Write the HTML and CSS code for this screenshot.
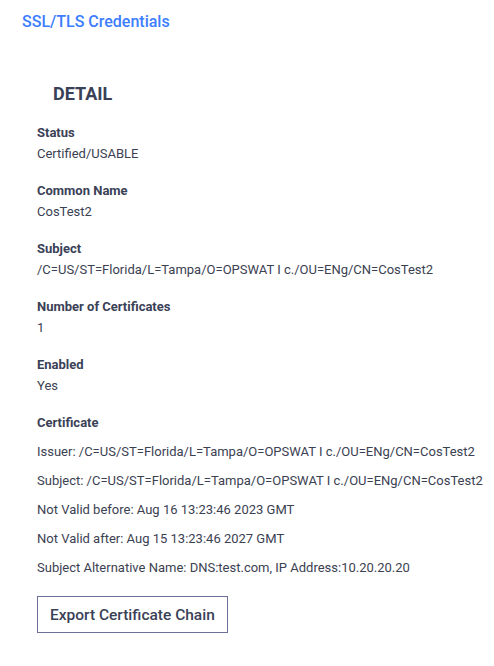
FILE: index.html
```html
<!DOCTYPE html>
<html>
<head>
<meta charset="utf-8">
<link rel="stylesheet" href="styles.css">
</head>
<body>
<div class="page">
  <div class="crumb">SSL/TLS Credentials</div>
  <h2 class="section-title">DETAIL</h2>
  <div class="fields">
    <div class="field">
      <div class="label">Status</div>
      <div class="value">Certified/USABLE</div>
    </div>
    <div class="field">
      <div class="label">Common Name</div>
      <div class="value">CosTest2</div>
    </div>
    <div class="field">
      <div class="label">Subject</div>
      <div class="value">/C=US/ST=Florida/L=Tampa/O=OPSWAT I c./OU=ENg/CN=CosTest2</div>
    </div>
    <div class="field">
      <div class="label">Number of Certificates</div>
      <div class="value">1</div>
    </div>
    <div class="field">
      <div class="label">Enabled</div>
      <div class="value">Yes</div>
    </div>
    <div class="field cert">
      <div class="label">Certificate</div>
      <div class="cert-line">Issuer: /C=US/ST=Florida/L=Tampa/O=OPSWAT I c./OU=ENg/CN=CosTest2</div>
      <div class="cert-line">Subject: /C=US/ST=Florida/L=Tampa/O=OPSWAT I c./OU=ENg/CN=CosTest2</div>
      <div class="cert-line">Not Valid before: Aug 16 13:23:46 2023 GMT</div>
      <div class="cert-line">Not Valid after: Aug 15 13:23:46 2027 GMT</div>
      <div class="cert-line">Subject Alternative Name: DNS:test.com, IP Address:10.20.20.20</div>
    </div>
    <div class="actions">
      <button class="btn">Export Certificate Chain</button>
    </div>
  </div>
</div>
</body>
</html>
```
FILE: styles.css
```css
html, body {
  margin: 0;
  padding: 0;
  background: #ffffff;
}
body {
  font-family: Roboto, "Liberation Sans", sans-serif;
  color: #3b4152;
}
.page {
  padding: 12px 0 0 22px;
}
.crumb {
  color: #3d7dff;
  font-size: 16px;
  font-weight: 500;
  line-height: 20px;
}
.section-title {
  margin: 0;
  padding: 50px 0 0 31px;
  font-size: 18px;
  font-weight: 700;
  line-height: 24px;
  color: #3a4157;
}
.fields {
  padding: 19px 0 0 15px;
  display: flex;
  flex-direction: column;
  gap: 21px;
}
.label {
  font-size: 13px;
  font-weight: 700;
  line-height: 16px;
  color: #3a4157;
}
.value,
.cert-line {
  font-size: 13px;
  line-height: 16px;
  white-space: nowrap;
}
.value {
  margin-top: 5px;
}
.cert-line {
  margin-top: 13px;
}
.actions {
  margin-top: -1px;
}
.btn {
  font-family: inherit;
  font-size: 15.5px;
  font-weight: 500;
  color: #3a4157;
  background: #fff;
  border: 1px solid #6b7196;
  height: 37px;
  padding: 0 12px;
  cursor: pointer;
}
```
